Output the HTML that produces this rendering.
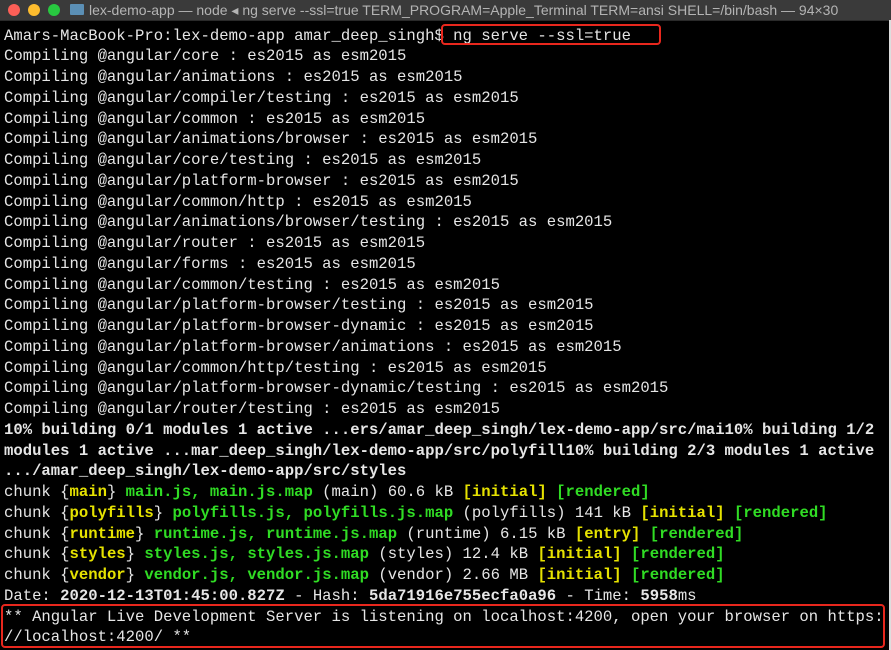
<!DOCTYPE html>
<html><head><meta charset="utf-8"><style>
html,body{margin:0;padding:0;background:#000;width:891px;height:650px;overflow:hidden}
.tb{position:absolute;left:0;top:0;width:891px;height:20px;background:#3a3a3a;border-bottom:1px solid #2a2a2a;font-family:"Liberation Sans",sans-serif;font-size:14px;color:#b4b4b4;line-height:20px}
.dot{position:absolute;top:4px;width:12px;height:12px;border-radius:50%}
.folder{position:absolute;left:70px;top:4px;width:14px;height:11px;background:#5b8fb5;border-radius:1px}
.title{position:absolute;left:89px;top:0;white-space:nowrap}
.term{position:absolute;left:4px;top:25.5px;font-family:"Liberation Mono",monospace;font-size:15.6px;line-height:20.75px;color:#e6e6e6;white-space:pre}
b{font-weight:bold}
.y{color:#e6e200}.g{color:#30dc24}
.box{position:absolute;border:2.5px solid #e8271d;border-radius:4px}
.edge{position:absolute;right:0;top:20px;width:2px;height:630px;background:#ddd}
</style></head><body>
<div class="tb">
<div class="dot" style="left:8px;background:#fc5f57"></div>
<div class="dot" style="left:28px;background:#fdbc2e"></div>
<div class="dot" style="left:48px;background:#28c840"></div>
<div class="folder"></div>
<div class="title">lex-demo-app — node ◂ ng serve --ssl=true TERM_PROGRAM=Apple_Terminal TERM=ansi SHELL=/bin/bash — 94×30</div>
</div>
<div class="term">Amars-MacBook-Pro:lex-demo-app amar_deep_singh$ ng serve --ssl=true
Compiling @angular/core : es2015 as esm2015
Compiling @angular/animations : es2015 as esm2015
Compiling @angular/compiler/testing : es2015 as esm2015
Compiling @angular/common : es2015 as esm2015
Compiling @angular/animations/browser : es2015 as esm2015
Compiling @angular/core/testing : es2015 as esm2015
Compiling @angular/platform-browser : es2015 as esm2015
Compiling @angular/common/http : es2015 as esm2015
Compiling @angular/animations/browser/testing : es2015 as esm2015
Compiling @angular/router : es2015 as esm2015
Compiling @angular/forms : es2015 as esm2015
Compiling @angular/common/testing : es2015 as esm2015
Compiling @angular/platform-browser/testing : es2015 as esm2015
Compiling @angular/platform-browser-dynamic : es2015 as esm2015
Compiling @angular/platform-browser/animations : es2015 as esm2015
Compiling @angular/common/http/testing : es2015 as esm2015
Compiling @angular/platform-browser-dynamic/testing : es2015 as esm2015
Compiling @angular/router/testing : es2015 as esm2015
<b>10% building 0/1 modules 1 active ...ers/amar_deep_singh/lex-demo-app/src/mai10% building 1/2</b>
<b>modules 1 active ...mar_deep_singh/lex-demo-app/src/polyfill10% building 2/3 modules 1 active</b>
<b>.../amar_deep_singh/lex-demo-app/src/styles</b>
chunk {<b class="y">main</b>} <b class="g">main.js, main.js.map</b> (main) 60.6 kB <b class="y">[initial]</b> <b class="g">[rendered]</b>
chunk {<b class="y">polyfills</b>} <b class="g">polyfills.js, polyfills.js.map</b> (polyfills) 141 kB <b class="y">[initial]</b> <b class="g">[rendered]</b>
chunk {<b class="y">runtime</b>} <b class="g">runtime.js, runtime.js.map</b> (runtime) 6.15 kB <b class="y">[entry]</b> <b class="g">[rendered]</b>
chunk {<b class="y">styles</b>} <b class="g">styles.js, styles.js.map</b> (styles) 12.4 kB <b class="y">[initial]</b> <b class="g">[rendered]</b>
chunk {<b class="y">vendor</b>} <b class="g">vendor.js, vendor.js.map</b> (vendor) 2.66 MB <b class="y">[initial]</b> <b class="g">[rendered]</b>
Date: <b>2020-12-13T01:45:00.827Z</b> - Hash: <b>5da71916e755ecfa0a96</b> - Time: <b>5958</b>ms
** Angular Live Development Server is listening on localhost:4200, open your browser on https:
//localhost:4200/ **</div>
<div class="box" style="left:441px;top:24px;width:216px;height:17px"></div>
<div class="box" style="left:1px;top:604px;width:880px;height:40px"></div>
<div class="edge"></div>
</body></html>
